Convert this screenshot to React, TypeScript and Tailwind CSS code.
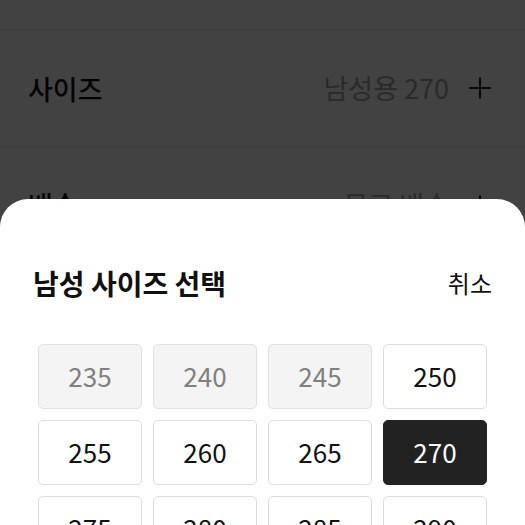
import React from "react";

const FONT = { fontFamily: '"Noto Sans CJK KR", "Noto Sans", sans-serif' };

function Plus({ className = "" }: { className?: string }) {
  return (
    <svg width="24" height="24" viewBox="0 0 24 24" className={className} fill="none" stroke="currentColor" strokeWidth="1.8">
      <path d="M12 1.5v21M1.5 12h21" />
    </svg>
  );
}

const sizes = [
  { v: "235", s: "off" },
  { v: "240", s: "off" },
  { v: "245", s: "off" },
  { v: "250", s: "on" },
  { v: "255", s: "on" },
  { v: "260", s: "on" },
  { v: "265", s: "on" },
  { v: "270", s: "sel" },
  { v: "275", s: "on" },
  { v: "280", s: "on" },
  { v: "285", s: "on" },
  { v: "290", s: "on" },
];

export default function App() {
  return (
    <div className="relative h-[525px] w-[525px] overflow-hidden bg-white" style={FONT}>
      <div className="flex flex-col">
        <div className="h-[30px] border-b border-[#e8e8e8]" />
        <div className="flex h-[117px] items-center justify-between border-b border-[#ececec] pl-[28px] pr-[33px]">
          <span className="mt-[3px] text-[27px] font-medium text-[#111]">사이즈</span>
          <div className="flex items-center gap-[19px]">
            <span className="text-[27px] text-[#a3a3a3]">남성용 270</span>
            <Plus className="text-[#111]" />
          </div>
        </div>
        <div className="flex h-[117px] items-center justify-between pl-[28px] pr-[33px]">
          <span className="text-[27px] font-medium text-[#111]">배송</span>
          <div className="flex items-center gap-[19px]">
            <span className="text-[27px] text-[#a3a3a3]">무료 배송</span>
            <Plus className="text-[#111]" />
          </div>
        </div>
      </div>

      <div className="absolute inset-0 bg-black/[0.74]" />

      <div className="absolute inset-x-0 top-[199px] bottom-0 flex flex-col rounded-t-[28px] bg-white">
        <div className="mx-auto mt-[17px] h-[5px] w-[49px] rounded-full bg-[#d2d2d2]" />
        <div className="mt-[53px] flex h-[36px] items-center justify-between pl-[33px] pr-[33px]">
          <span className="text-[28px] font-bold leading-none text-[#111]">남성 사이즈 선택</span>
          <span className="text-[24px] leading-none text-[#111]">취소</span>
        </div>
        <div className="mt-[47px] grid grid-cols-4 gap-[11px] px-[38px]">
          {sizes.map((x) => (
            <div
              key={x.v}
              className={
                x.s === "off"
                  ? "flex h-[65px] items-center justify-center rounded-[5px] border border-[#e0e0e0] bg-[#f4f4f4] pb-[2px] text-[26px] text-[#808080]"
                  : x.s === "sel"
                  ? "flex h-[65px] items-center justify-center rounded-[5px] border border-[#222] bg-[#222] pb-[2px] text-[26px] text-white"
                  : "flex h-[65px] items-center justify-center rounded-[5px] border border-[#dddddd] bg-white pb-[2px] text-[26px] text-[#111]"
              }
            >
              {x.v}
            </div>
          ))}
        </div>
      </div>
    </div>
  );
}
